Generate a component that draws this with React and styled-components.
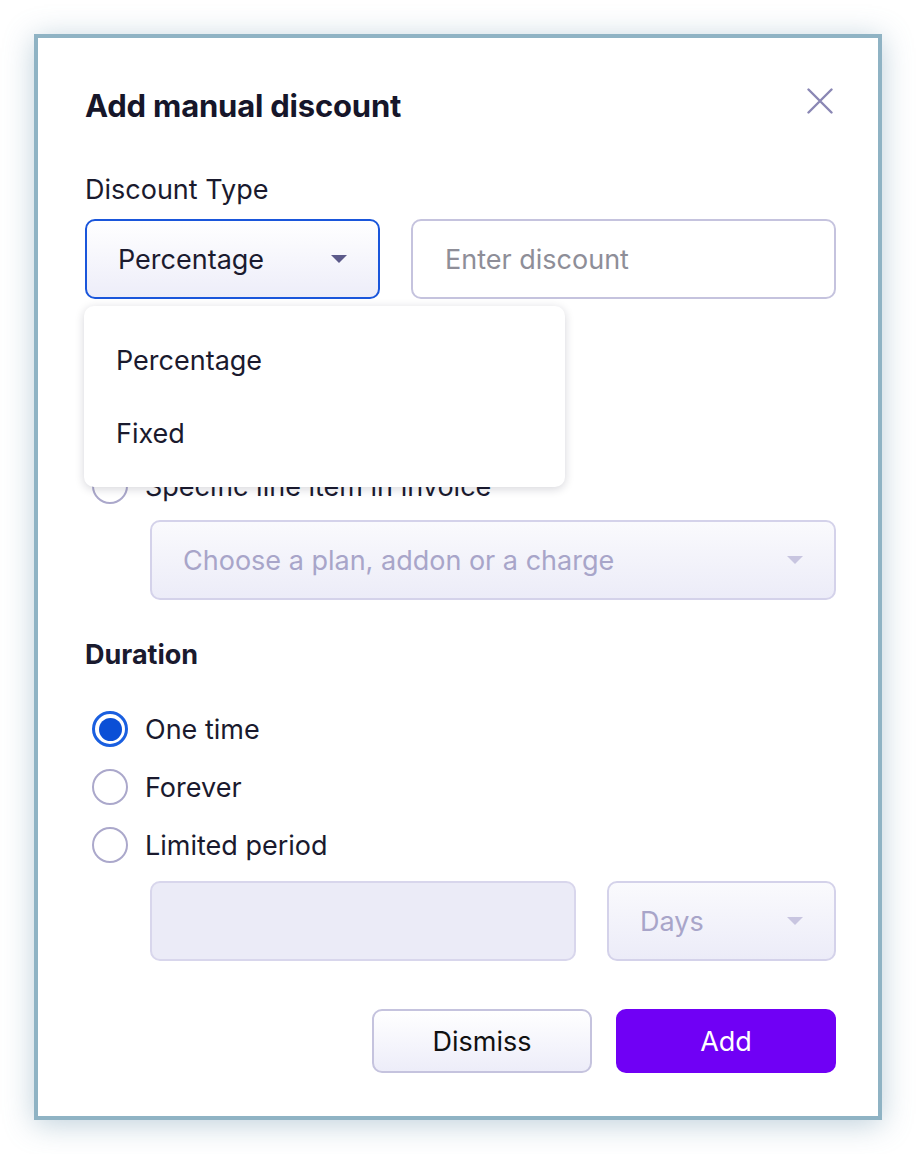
import React from "react"
import styled, { createGlobalStyle } from "styled-components"

const GlobalStyle = createGlobalStyle`
  html, body {
    margin: 0;
    padding: 0;
    background: #ffffff;
  }
  body {
    font-family: Inter, "Noto Sans", sans-serif;
    color: #1a1a2e;
  }
`

const Page = styled.div`
  padding: 34px;
  width: 916px;
  box-sizing: border-box;
`

const Dialog = styled.div`
  width: 848px;
  height: 1086px;
  box-sizing: border-box;
  border: 4px solid #8fb3c4;
  background: #ffffff;
  box-shadow: 0 4px 28px rgba(110, 150, 175, 0.45);
  padding: 51px 42px 44px 47px;
  display: flex;
  flex-direction: column;
`

const Header = styled.div`
  display: flex;
  justify-content: space-between;
  align-items: center;
  height: 34px;
`

const Title = styled.h1`
  margin: 0;
  font-size: 31px;
  line-height: 34px;
  font-weight: 700;
  color: #16162a;
  letter-spacing: -0.2px;
`

const CloseButton = styled.button`
  border: none;
  background: none;
  padding: 0;
  margin-right: 2px;
  margin-top: -10px;
  width: 28px;
  height: 28px;
  display: flex;
  align-items: center;
  justify-content: center;
  cursor: pointer;
`

const Label = styled.div`
  font-size: 27px;
  line-height: 30px;
  font-weight: ${props => (props.$bold ? 700 : 400)};
  color: #1a1a2e;
  margin-top: ${props => props.$top}px;
  visibility: ${props => (props.$covered ? "hidden" : "visible")};
`

const TypeRow = styled.div`
  position: relative;
  display: grid;
  grid-template-columns: 295px 1fr;
  gap: 31px;
  margin-top: 14px;
`

const SelectBox = styled.div`
  height: 80px;
  box-sizing: border-box;
  border-radius: 10px;
  border: 2px solid ${props => (props.$focused ? "#1a56db" : props.$disabled ? "#d4d2ea" : "#c5c3de")};
  background: ${props =>
    props.$disabled
      ? "linear-gradient(to bottom, #fafafd, #ececf8)"
      : "linear-gradient(to bottom, #ffffff, #ededf9)"};
  display: flex;
  align-items: center;
  justify-content: space-between;
  padding: 0 31px;
  font-size: 27px;
  color: ${props => (props.$disabled ? "#a8a5c9" : "#1b1b2f")};
`

const Caret = styled.span`
  width: 0;
  height: 0;
  border-left: 8px solid transparent;
  border-right: 8px solid transparent;
  border-top: 8px solid ${props => (props.$light ? "#c8c5e0" : "#5c5a8a")};
`

const TextInput = styled.div`
  height: 80px;
  box-sizing: border-box;
  border-radius: 10px;
  border: 2px solid ${props => (props.$disabled ? "#d8d6ec" : "#c5c3de")};
  background: ${props => (props.$disabled ? "#ebebf7" : "#ffffff")};
  display: flex;
  align-items: center;
  padding: 0 32px;
  font-size: 27px;
  color: #8e8e98;
`

const Menu = styled.div`
  position: absolute;
  top: 87px;
  left: -1px;
  width: 481px;
  height: 181px;
  box-sizing: border-box;
  background: #ffffff;
  border-radius: 10px;
  box-shadow: 0 2px 10px rgba(20, 20, 50, 0.18);
  padding: 18px 0;
  z-index: 2;
`

const MenuItem = styled.div`
  height: 73px;
  display: flex;
  align-items: center;
  padding-left: 32px;
  font-size: 27px;
  color: #1a1a2e;
`

const RadioList = styled.div`
  display: flex;
  flex-direction: column;
  gap: 22px;
  margin-top: ${props => props.$top}px;
`

const RadioRow = styled.label`
  display: flex;
  align-items: center;
  gap: 17px;
  padding-left: 7px;
  height: 36px;
  font-size: 27px;
  color: #1a1a2e;
  visibility: ${props => (props.$covered ? "hidden" : "visible")};
`

const RadioCircle = styled.span`
  width: 36px;
  height: 36px;
  flex-shrink: 0;
  box-sizing: border-box;
  border-radius: 50%;
  border: ${props => (props.$checked ? "3px solid #1a5fe0" : "2px solid #aba8cb")};
  background: #ffffff;
  display: flex;
  align-items: center;
  justify-content: center;
  &::after {
    content: "";
    display: ${props => (props.$checked ? "block" : "none")};
    width: 23px;
    height: 23px;
    border-radius: 50%;
    background: #0b4fd6;
  }
`

const Indented = styled.div`
  margin-left: 65px;
  margin-top: ${props => props.$top}px;
`

const PeriodRow = styled(Indented)`
  display: grid;
  grid-template-columns: 1fr 229px;
  gap: 31px;
`

const Footer = styled.div`
  display: flex;
  justify-content: flex-end;
  gap: 24px;
  margin-top: 48px;
`

const Button = styled.button`
  width: 220px;
  height: 64px;
  box-sizing: border-box;
  border-radius: 10px;
  font-family: Inter, "Noto Sans", sans-serif;
  font-size: 27px;
  cursor: pointer;
  border: ${props => (props.$primary ? "none" : "2px solid #c5c3de")};
  background: ${props =>
    props.$primary ? "#7000f5" : "linear-gradient(to bottom, #ffffff, #ededf9)"};
  color: ${props => (props.$primary ? "#ffffff" : "#111111")};
`

const CloseIcon = () => (
  <svg width="26" height="26" viewBox="0 0 26 26" fill="none">
    <path d="M1.5 1.5 L24.5 24.5 M24.5 1.5 L1.5 24.5" stroke="#8a87b4" strokeWidth="2.4" strokeLinecap="round" />
  </svg>
)

const App = () => (
  <Page>
    <GlobalStyle />
    <Dialog>
      <Header>
        <Title>Add manual discount</Title>
        <CloseButton aria-label="Close">
          <CloseIcon />
        </CloseButton>
      </Header>

      <Label $top={52}>Discount Type</Label>
      <TypeRow>
        <SelectBox $focused>
          Percentage
          <Caret />
        </SelectBox>
        <TextInput>Enter discount</TextInput>
        <Menu>
          <MenuItem>Percentage</MenuItem>
          <MenuItem>Fixed</MenuItem>
        </Menu>
      </TypeRow>

      {/* covered by the open menu */}
      <Label $bold $covered $top={53}>Apply on</Label>
      <RadioList $top={28}>
        <RadioRow $covered>
          <RadioCircle $checked />
          Invoice total
        </RadioRow>
        <RadioRow>
          <RadioCircle />
          Specific line item in invoice
        </RadioRow>
      </RadioList>
      <Indented $top={16}>
        <SelectBox $disabled>
          Choose a plan, addon or a charge
          <Caret $light />
        </SelectBox>
      </Indented>

      <Label $bold $top={40}>Duration</Label>
      <RadioList $top={41}>
        <RadioRow>
          <RadioCircle $checked />
          One time
        </RadioRow>
        <RadioRow>
          <RadioCircle />
          Forever
        </RadioRow>
        <RadioRow>
          <RadioCircle />
          Limited period
        </RadioRow>
      </RadioList>
      <PeriodRow $top={18}>
        <TextInput $disabled />
        <SelectBox $disabled>
          Days
          <Caret $light />
        </SelectBox>
      </PeriodRow>

      <Footer>
        <Button>Dismiss</Button>
        <Button $primary>Add</Button>
      </Footer>
    </Dialog>
  </Page>
)

export default App
